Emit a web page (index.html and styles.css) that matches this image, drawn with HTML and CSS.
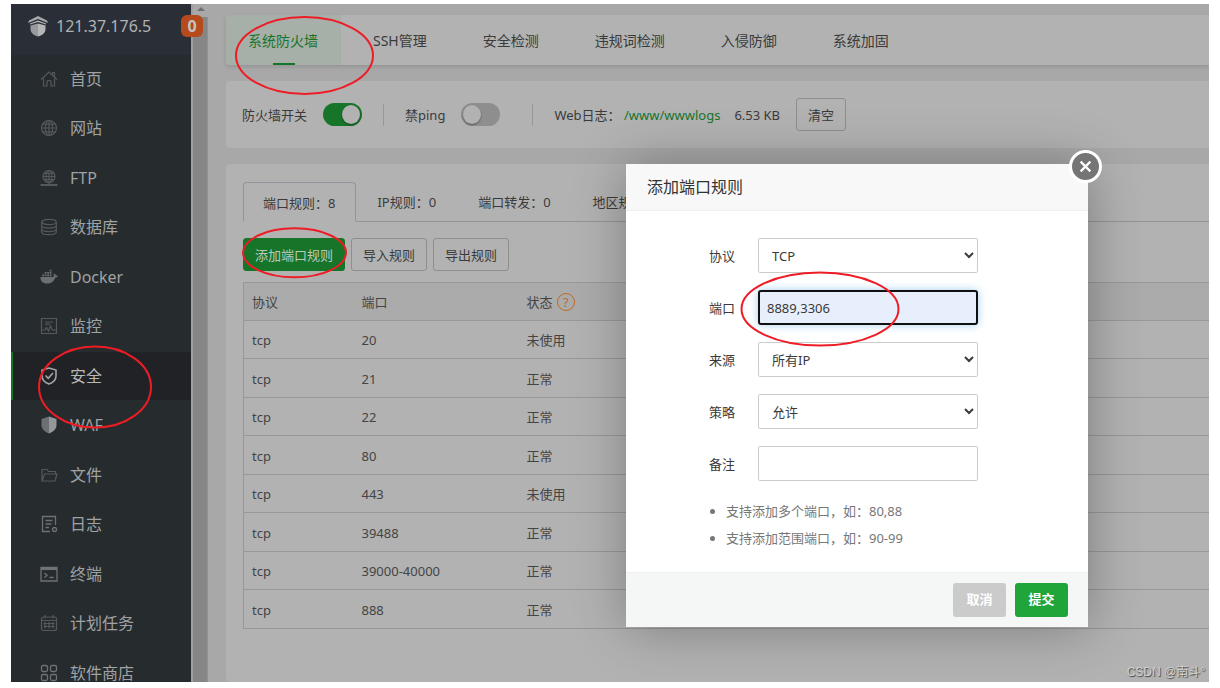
FILE: index.html
```html
<!DOCTYPE html>
<html lang="zh-CN">
<head>
<meta charset="utf-8">
<title>安全 - 系统防火墙</title>
<link rel="stylesheet" href="styles.css">
</head>
<body>
<div class="frame">
  <aside class="sidebar">
    <header class="server">
      <svg class="server-logo" viewBox="0 0 20 21" fill="#b4b6b8"><path d="M10 0 1 4.500 0 7l10-4 10 4-1-2.500z" opacity=".9"/><path d="M10 4.500 2 7.500v1l8-2.500 8 2.500v-1z"/><path d="M2.500 9.500 10 7.500v13C5 19 2.500 16.500 2.500 13z" opacity=".8"/><path d="M17.500 9.500 10 7.500v13c5-1.500 7.500-4 7.500-7.500z"/></svg>
      <span class="server-ip">121.37.176.5</span>
      <span class="badge">0</span>
    </header>
    <nav>
      <ul class="menu">
        <li><a href="#home"><svg viewBox="0 0 18 18"><path d="M1 9.500 9 2l8 7.500M3.500 8.500V16h3.500v-4.500q0-1 1-1h2q1 0 1 1V16h3.500V8.500M12.500 4.500V2.500h2v4"/></svg>首页</a></li>
        <li><a href="#site"><svg viewBox="0 0 18 18"><circle cx="9" cy="9" r="7.500"/><ellipse cx="9" cy="9" rx="3.700" ry="7.500"/><path d="M9 1.500v15M1.500 9h15M2.500 5.200h13M2.500 12.800h13"/></svg>网站</a></li>
        <li><a href="#ftp"><svg viewBox="0 0 18 18"><circle cx="9" cy="7.500" r="6"/><ellipse cx="9" cy="7.500" rx="3" ry="6"/><path d="M9 1.500v12M3 7.500h12M4 4.500h10M4 10.500h10M9 13.500v2"/><path d="M.5 16h17" stroke-width="2"/></svg>FTP</a></li>
        <li><a href="#db"><svg viewBox="0 0 18 18"><ellipse cx="9" cy="4" rx="7.300" ry="2.700"/><path d="M1.700 4v10c0 3.500 14.600 3.500 14.600 0V4M1.700 7.500c0 3.400 14.600 3.400 14.600 0M1.700 11c0 3.400 14.600 3.400 14.600 0"/></svg>数据库</a></li>
        <li><a href="#docker"><svg class="solid" viewBox="0 0 18 18"><path d="M.5 9h13c.6-1 .4-2 0-2.700l1-.9c.9.600 1.200 1.400 1.200 2.200.7-.1 1.500 0 2.200.4-.5 1.100-1.500 1.500-2.700 1.500C14 13.500 11 15.500 7 15.500 2.500 15.500.3 13 .5 9zM2.200 6.500h1.800v1.800H2.200zM4.700 6.500h1.800v1.800H4.700zM7.200 6.500H9v1.800H7.200zM9.700 6.500h1.800v1.800H9.700zM4.700 4h1.800v1.800H4.700zM7.200 4H9v1.800H7.200zM9.700 4h1.800v1.800H9.700zM9.700 1.800h1.800v1.600H9.700z"/></svg>Docker</a></li>
        <li><a href="#monitor"><svg viewBox="0 0 18 18"><path d="M1.500 1.500h15v15h-15zM5 5h8M5 7.200h5M2 13h3l1.500-2.500L8.500 14l2-5 2 4H16"/></svg>监控</a></li>
        <li class="active"><a href="#safe" aria-current="page"><svg viewBox="0 0 18 18"><path d="M9 1 16 3v6c0 4-3 6.500-7 8-4-1.500-7-4-7-8V3zM5.500 8.500 8.200 11.300 13 6"/></svg>安全</a></li>
        <li><a href="#waf"><svg class="solid" viewBox="0 0 18 18"><path d="M9 .5 1.500 3v6c0 4 3 6.800 7.500 8.500z"/><path d="M9 .5 16.500 3v6c0 4-3 6.800-7.500 8.500z" fill="#94989a"/></svg>WAF</a></li>
        <li><a href="#files"><svg viewBox="0 0 18 18"><path d="M2 15V3.500h5l1.500 2h7V8M2 15l2.500-7H17l-2 7z"/></svg>文件</a></li>
        <li><a href="#logs"><svg class="bright" viewBox="0 0 18 18"><path d="M15.500 10V1.500h-13v15H10M5.500 5.500h7M5.500 9h6M5.500 12.500H9"/><circle cx="14.500" cy="14.500" r="2"/></svg>日志</a></li>
        <li><a href="#term"><svg class="bright" viewBox="0 0 18 18"><path d="M1 2.500h16v13.500H1zM4.500 8l2.500 2.200-2.500 2.200M9.500 12.500h4"/><path d="M1 3.800h16" stroke-width="2.500"/></svg>终端</a></li>
        <li><a href="#cron"><svg viewBox="0 0 18 18"><rect x="1.500" y="3" width="15" height="13.500" rx="2"/><path d="M5 1v3.500M13 1v3.500M2 6.500h14M5 8v6.500M9 8v6.500M13 8v6.500M3.500 9.500h11M3.500 12.500h11"/></svg>计划任务</a></li>
        <li><a href="#store"><svg class="bright" viewBox="0 0 18 18"><rect x="1.500" y="1.500" width="6" height="6" rx="1.500"/><rect x="10.500" y="1.500" width="6" height="6" rx="1.500"/><rect x="1.500" y="10.500" width="6" height="6" rx="1.500"/><rect x="10.500" y="10.500" width="6" height="6" rx="1.500"/></svg>软件商店</a></li>
      </ul>
    </nav>
  </aside>
  <div class="scroll-track"><span class="scroll-arrow"></span><span class="scroll-thumb"></span></div>

  <main class="content">
    <nav class="card tabs">
      <a class="tab current" href="#firewall">系统防火墙</a>
      <a class="tab" href="#ssh">SSH管理</a>
      <a class="tab" href="#check">安全检测</a>
      <a class="tab" href="#words">违规词检测</a>
      <a class="tab" href="#intrusion">入侵防御</a>
      <a class="tab" href="#harden">系统加固</a>
    </nav>

    <section class="card toolbar">
      <label for="fw">防火墙开关</label>
      <input class="switch" id="fw" type="checkbox" checked>
      <span class="divider"></span>
      <label for="ping">禁ping</label>
      <input class="switch" id="ping" type="checkbox">
      <span class="divider wide"></span>
      <span class="weblog">Web日志： <a href="#wwwlogs">/www/wwwlogs</a></span>
      <span class="size">6.53 KB</span>
      <button class="btn" type="button">清空</button>
    </section>

    <section class="card rules">
      <nav class="subtabs">
        <a class="subtab current" href="#port">端口规则：8</a>
        <a class="subtab" href="#ip">IP规则：0</a>
        <a class="subtab" href="#forward">端口转发：0</a>
        <a class="subtab" href="#area">地区规则：0</a>
      </nav>
      <div class="actions">
        <button class="btn primary" type="button">添加端口规则</button>
        <button class="btn" type="button">导入规则</button>
        <button class="btn" type="button">导出规则</button>
      </div>
      <table class="table">
        <colgroup><col class="c-proto"><col class="c-port"><col></colgroup>
        <thead><tr><th>协议</th><th>端口</th><th>状态 <span class="help">?</span></th></tr></thead>
        <tbody>
          <tr><td>tcp</td><td>20</td><td>未使用</td></tr>
          <tr><td>tcp</td><td>21</td><td>正常</td></tr>
          <tr><td>tcp</td><td>22</td><td>正常</td></tr>
          <tr><td>tcp</td><td>80</td><td>正常</td></tr>
          <tr><td>tcp</td><td>443</td><td>未使用</td></tr>
          <tr><td>tcp</td><td>39488</td><td>正常</td></tr>
          <tr><td>tcp</td><td>39000-40000</td><td>正常</td></tr>
          <tr><td>tcp</td><td>888</td><td>正常</td></tr>
        </tbody>
      </table>
    </section>
  </main>

  <form class="modal" role="dialog" aria-labelledby="modal-title">
    <h2 class="modal-title" id="modal-title">添加端口规则</h2>
    <button class="close" type="button" aria-label="关闭"><svg viewBox="0 0 12 12"><path d="M1.500 1.500l9 9M10.500 1.500l-9 9"/></svg></button>
    <div class="modal-body">
      <div class="field"><label for="proto">协议</label><select id="proto"><option>TCP</option><option>UDP</option></select></div>
      <div class="field"><label for="portin">端口</label><input class="filled" id="portin" type="text" value="8889,3306"></div>
      <div class="field"><label for="source">来源</label><select id="source"><option>所有IP</option></select></div>
      <div class="field"><label for="policy">策略</label><select id="policy"><option>允许</option><option>拒绝</option></select></div>
      <div class="field"><label for="note">备注</label><input id="note" type="text"></div>
      <ul class="tips">
        <li>支持添加多个端口，如：80,88</li>
        <li>支持添加范围端口，如：90-99</li>
      </ul>
    </div>
    <footer class="modal-foot">
      <button class="foot-btn cancel" type="button">取消</button>
      <button class="foot-btn submit" type="button">提交</button>
    </footer>
  </form>

  <svg class="marks" width="1198" height="678" viewBox="11 4 1198 678">
    <ellipse cx="304.500" cy="55.500" rx="68.500" ry="38.500"/>
    <ellipse cx="95" cy="387" rx="56" ry="40.500"/>
    <ellipse cx="294.500" cy="252.800" rx="51.500" ry="24.500"/>
    <ellipse cx="820" cy="309" rx="78.500" ry="36.500"/>
  </svg>
  <span class="watermark">CSDN @南斗°</span>
</div>
</body>
</html>
```
FILE: styles.css
```css
* { box-sizing: border-box; }

body {
  margin: 0;
  height: 100vh;
  padding: 4px 11px 6px;
  background: #fff;
  color: #3a3a3a;
  font: 13px/20px "Noto Sans", "Noto Sans CJK SC", sans-serif;
}

button, input, select { font: inherit; color: inherit; }
a { color: inherit; text-decoration: none; }
ul { list-style: none; margin: 0; padding: 0; }

.frame {
  position: relative;
  display: flex;
  height: 100%;
  overflow: hidden;
  background: #a8a8a8;
}

/* Sidebar */
.sidebar { flex: 0 0 180px; background: #262b2e; color: #a0a2a3; }
.server {
  position: relative;
  display: flex;
  align-items: center;
  gap: 8px;
  height: 51px;
  padding: 0 0 7px 17px;
  background: #2a2e36;
  color: #b0b2b4;
  font-size: 16px;
}
.server-logo { width: 20px; height: 21px; }
.badge {
  position: absolute;
  z-index: 1;
  top: 11px;
  right: -12px;
  width: 22px;
  height: 22px;
  border-radius: 6px;
  background: #b54a1c;
  color: #c4c4c4;
  font-weight: 700;
  font-size: 16px;
  line-height: 22px;
  text-align: center;
}
.menu li { height: 48px; margin-bottom: 1px; border-left: 2px solid transparent; }
.menu li:nth-child(even) { margin-bottom: 2px; }
.menu a {
  display: flex;
  align-items: center;
  gap: 12px;
  height: 100%;
  padding-left: 27px;
  font-size: 16px;
}
.menu svg { width: 18px; height: 18px; fill: none; stroke: #56595b; stroke-width: 1.2; }
.menu svg.bright { stroke: #6f7274; stroke-width: 1.3; }
.menu svg.solid { fill: #6d7072; stroke: none; }
.menu .active { background: #202226; border-left-color: #17752a; color: #b8b8b8; }
.menu .active svg { stroke: #a2a4a5; stroke-width: 1.6; }

.scroll-track {
  flex: 0 0 17px;
  display: flex;
  flex-direction: column;
  align-items: center;
  border-left: 2px solid #a0a0a0;
  background: #a8a8a8;
}
.scroll-arrow {
  margin: 3px 0 6px;
  border: 4px solid transparent;
  border-top: 0;
  border-bottom-color: #707070;
}
.scroll-thumb { flex: 1; width: 15px; background: #868686; border-right: 1px solid #929292; }

/* Page content */
.content {
  flex: 1;
  min-width: 0;
  display: flex;
  flex-direction: column;
  gap: 16px;
  padding: 11px 0 0 18px;
}
.card { background: #b2b2b2; border-radius: 4px 0 0 4px; }
.tabs { display: flex; height: 50px; box-shadow: 0 2px 4px rgba(0, 0, 0, .12); font-size: 14px; }
.tab { padding: 0 28px; line-height: 52px; }
.tab.current {
  position: relative;
  margin-right: 4px;
  padding: 0 23px 0 22px;
  border-radius: 4px 0 0 4px;
  background: #a7afa9;
  color: #17752a;
}
.tab.current::after {
  content: "";
  position: absolute;
  left: 50%;
  bottom: 0;
  width: 22px;
  margin-left: -11px;
  border-bottom: 2px solid #17752a;
}

.toolbar { display: flex; align-items: center; height: 67px; padding-left: 16px; }
.switch {
  appearance: none;
  width: 39px;
  height: 23px;
  margin: 0 0 0 16px;
  padding: 2px;
  border-radius: 12px;
  background: #8e8e8e;
}
.switch::before {
  content: "";
  display: block;
  width: 18px;
  height: 19px;
  border-radius: 50%;
  background: #b2b2b2;
  box-shadow: 0 1px 2px rgba(0, 0, 0, .4);
}
.switch:checked { background: #17752a; }
.switch:checked::before { margin-left: auto; }
.divider { width: 1px; height: 22px; margin: 0 21px; background: #989898; }
.divider.wide { margin-left: 32px; }
.weblog a { color: #17752a; }
.size { margin: 0 16px 0 14px; }
.btn {
  height: 33px;
  padding: 0 11px;
  border: 1px solid #8e8e8e;
  border-radius: 3px;
  background: transparent;
}
.btn.primary { border-color: #17752a; background: #17752a; color: #bdc9bf; }

.rules { flex: 1; padding: 18px 0 0 17px; }
.subtabs { display: flex; height: 40px; border-bottom: 1px solid #94949c; }
.subtab { padding: 0 21px; line-height: 40px; }
.subtab.current {
  height: 40px;
  padding: 0 20px 0 19px;
  border: 1px solid #94949c;
  border-bottom-color: #b2b2b2;
  border-radius: 4px 4px 0 0;
}
.actions { display: flex; gap: 6px; margin: 16px 0 11px; }
.table {
  width: 100%;
  table-layout: fixed;
  border-collapse: collapse;
  border: 1px solid #989898;
  border-right: 0;
  color: #444;
}
.c-proto { width: 110px; }
.c-port { width: 165px; }
.table th, .table td { padding: 1px 8px 0; text-align: left; font-weight: 400; }
.table tr { height: 38px; border-bottom: 1px solid #989898; }
.table tbody tr:nth-child(even) { height: 39px; }
.table thead { background: #ababab; }
.help {
  display: inline-block;
  width: 18px;
  height: 18px;
  margin-left: 1px;
  border: 1px solid #bd6a24;
  border-radius: 50%;
  color: #bd6a24;
  line-height: 16px;
  text-align: center;
}

/* Dialog */
.modal {
  position: absolute;
  top: 160px;
  left: 615px;
  width: 462px;
  background: #fff;
  box-shadow: 1px 1px 50px rgba(0, 0, 0, .3);
}
.modal-title {
  margin: 0;
  padding: 0 21px;
  border-bottom: 1px solid #eee;
  background: #f8f8f8;
  color: #333;
  font-size: 16px;
  font-weight: 400;
  line-height: 46px;
}
.close {
  position: absolute;
  top: -14px;
  right: -14px;
  display: flex;
  align-items: center;
  justify-content: center;
  width: 33px;
  height: 33px;
  padding: 0;
  border: 3px solid #fff;
  border-radius: 50%;
  background: #757575;
}
.close svg { width: 13px; height: 13px; fill: none; stroke: #fff; stroke-width: 2; }
.modal-body {
  display: flex;
  flex-direction: column;
  gap: 17px;
  padding: 27px 0 20px;
}
.field { display: flex; align-items: center; }
.field label { width: 109px; margin-right: 23px; text-align: right; }
.field input, .field select {
  width: 220px;
  height: 35px;
  padding: 0 9px;
  border: 1px solid #ccc;
  border-radius: 2px;
  background: #fff;
}
.field select { padding-right: 2px; }
.field .filled {
  padding: 0 7px;
  border: 2px solid #101010;
  border-radius: 3px;
  background: #e8effc;
  box-shadow: 0 0 8px rgba(102, 175, 233, .6);
}
.tips { padding-left: 100px; color: #777; line-height: 27px; list-style: disc; }
.modal-foot {
  display: flex;
  justify-content: flex-end;
  gap: 9px;
  padding: 10px 20px;
  border-top: 1px solid #edf1f1;
  background: #f5f7f7;
}
.foot-btn {
  width: 53px;
  height: 34px;
  padding: 0 0 2px;
  border: 0;
  border-radius: 3px;
  color: #fff;
  font-weight: 700;
}
.cancel { background: #cbcbcb; }
.submit { background: #20a53a; }

/* Hand-drawn rings over the screen */
.marks {
  position: absolute;
  top: 0;
  left: 0;
  fill: none;
  stroke: #ee1c25;
  stroke-width: 2;
  pointer-events: none;
}
.watermark {
  position: absolute;
  right: 4px;
  bottom: 0;
  color: #d0d0d0;
  font: 12px/20px "Liberation Sans", "Noto Sans CJK SC", sans-serif;
  text-shadow: 1px 1px 1px #444;
}
```
